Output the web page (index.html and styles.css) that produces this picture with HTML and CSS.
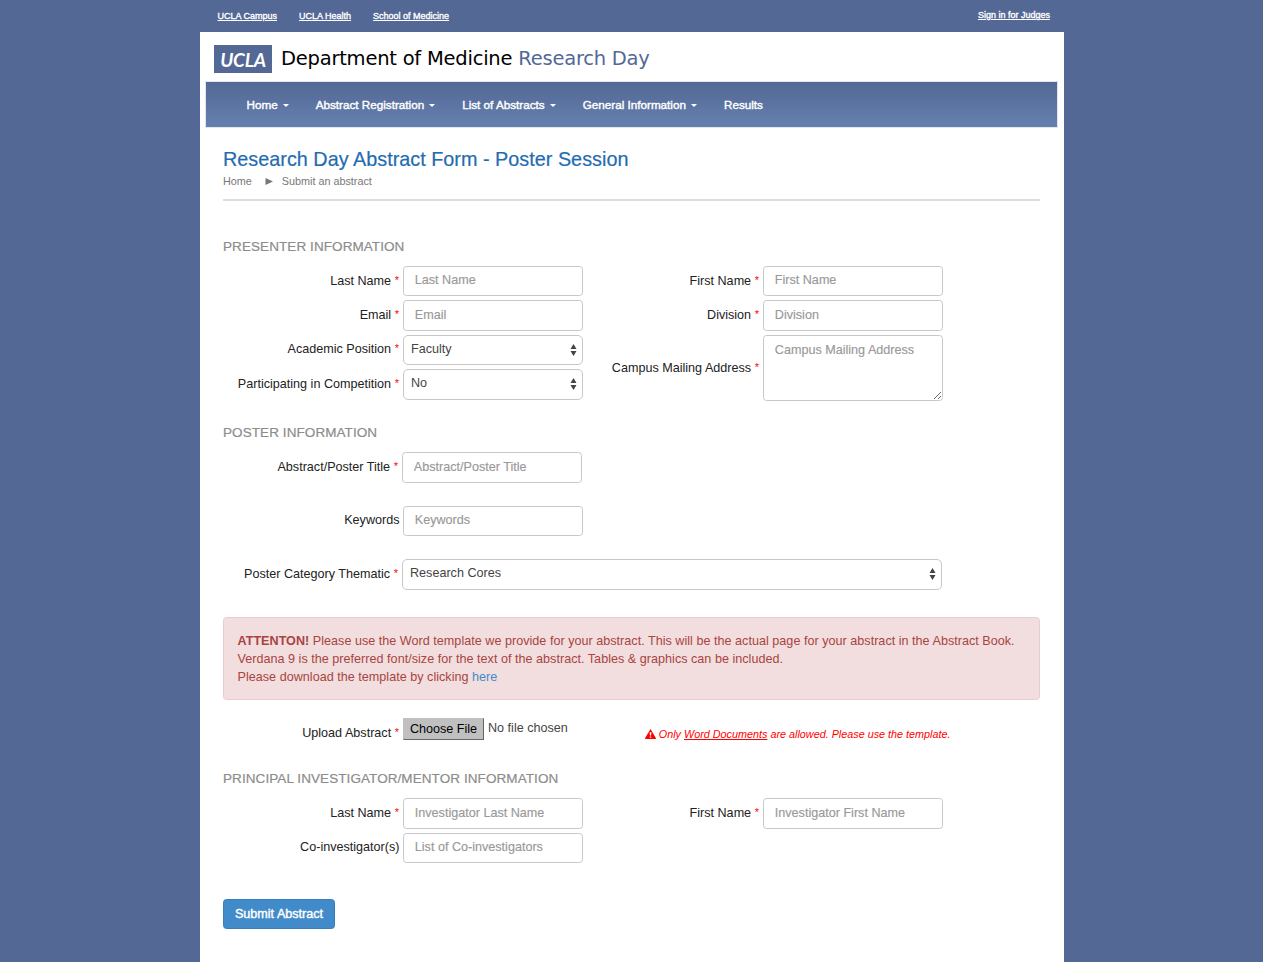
FILE: index.html
```html
<!DOCTYPE html>
<html lang="en">
<head>
<meta charset="utf-8">
<title>Research Day Abstract Form</title>
<link rel="stylesheet" href="styles.css">
</head>
<body>
<div class="page">
  <div class="topbar">
    <div class="toplinks"><a href="#">UCLA Campus</a><a href="#">UCLA Health</a><a href="#">School of Medicine</a></div>
    <a class="signin" href="#">Sign in for Judges</a>
  </div>
  <div class="sheet">
    <header class="brand">
      <span class="badge">UCLA</span>
      <span class="dept">Department of Medicine</span>
      <span class="day">Research Day</span>
    </header>
    <nav class="nav">
      <a class="n1" href="#"><span>Home</span><i class="caret"></i></a>
      <a class="n2" href="#"><span>Abstract Registration</span><i class="caret"></i></a>
      <a class="n3" href="#"><span>List of Abstracts</span><i class="caret"></i></a>
      <a class="n4" href="#"><span>General Information</span><i class="caret"></i></a>
      <a class="n5" href="#"><span>Results</span></a>
    </nav>
    <main class="content">
      <h1>Research Day Abstract Form - Poster Session</h1>
      <div class="crumbs"><span>Home</span><svg class="arrow" viewBox="0 0 8 7"><path d="M0.5 0L8 3.5L0.5 7Z"/></svg><span>Submit an abstract</span></div>
      <form>
        <h2 class="h-presenter">Presenter Information</h2>
        <div class="columns">
          <div class="stack">
            <div class="row"><label>Last Name <b>*</b></label><input placeholder="Last Name"></div>
            <div class="row"><label>Email <b>*</b></label><input placeholder="Email"></div>
            <div class="row"><label>Academic Position <b>*</b></label><div class="select"><span>Faculty</span><svg viewBox="0 0 6 12"><path d="M0 5L3 0L6 5ZM0 7L3 12L6 7Z"/></svg></div></div>
            <div class="row"><label>Participating in Competition <b>*</b></label><div class="select"><span>No</span><svg viewBox="0 0 6 12"><path d="M0 5L3 0L6 5ZM0 7L3 12L6 7Z"/></svg></div></div>
          </div>
          <div class="stack">
            <div class="row"><label>First Name <b>*</b></label><input placeholder="First Name"></div>
            <div class="row"><label>Division <b>*</b></label><input placeholder="Division"></div>
            <div class="row tall"><label>Campus Mailing Address <b>*</b></label><textarea placeholder="Campus Mailing Address"></textarea></div>
          </div>
        </div>
        <h2 class="h-poster">Poster Information</h2>
        <div class="poster">
          <div class="row shift"><label>Abstract/Poster Title <b>*</b></label><input placeholder="Abstract/Poster Title"></div>
          <div class="row"><label>Keywords</label><input placeholder="Keywords"></div>
          <div class="row shift wide"><label>Poster Category Thematic <b>*</b></label><div class="select"><span>Research Cores</span><svg viewBox="0 0 6 12"><path d="M0 5L3 0L6 5ZM0 7L3 12L6 7Z"/></svg></div></div>
        </div>
        <div class="alert"><strong>ATTENTON!</strong> Please use the Word template we provide for your abstract. This will be the actual page for your abstract in the Abstract Book.<br>Verdana 9 is the preferred font/size for the text of the abstract. Tables &amp; graphics can be included.<br>Please download the template by clicking <a href="#">here</a></div>
        <div class="upload">
          <label>Upload Abstract <b>*</b></label>
          <button type="button" class="file">Choose File</button>
          <span class="nofile">No file chosen</span>
          <div class="warn"><svg viewBox="0 0 11 10"><path fill-rule="evenodd" d="M5.5 0L11 9.2Q11 10 10.4 10H0.6Q0 10 0 9.2ZM4.6 3.2L4.9 6.6H6.1L6.4 3.2ZM4.8 7.4V8.7H6.2V7.4Z"/></svg><em>Only <u>Word Documents</u> are allowed. Please use the template.</em></div>
        </div>
        <h2 class="h-pi">Principal Investigator/Mentor Information</h2>
        <div class="columns">
          <div class="stack">
            <div class="row"><label>Last Name <b>*</b></label><input placeholder="Investigator Last Name"></div>
            <div class="row"><label>Co-investigator(s)</label><input placeholder="List of Co-investigators"></div>
          </div>
          <div class="stack">
            <div class="row"><label>First Name <b>*</b></label><input placeholder="Investigator First Name"></div>
          </div>
        </div>
        <button type="button" class="submit">Submit Abstract</button>
      </form>
    </main>
  </div>
</div>
</body>
</html>
```
FILE: styles.css
```css
* { box-sizing: border-box; }
body { margin: 0; background: #536895; font: 12.6px/18px "Liberation Sans", Arial, sans-serif; color: #222; overflow: hidden; }
.page { width: 864px; margin-left: 200px; height: 962px; display: flex; flex-direction: column; }
.topbar { height: 32px; flex: none; display: flex; justify-content: space-between; padding: 10px 14px 0 17.5px; font-size: 9px; line-height: 12px; -webkit-text-stroke: 0.35px #fff; }
.topbar a { color: #fff; }
.toplinks { display: flex; gap: 22px; }
.signin { margin-top: -1px; }
.sheet { background: #fff; flex: 1; }
.brand { height: 50px; display: flex; align-items: flex-start; padding: 13px 0 0 14px; font: 19.5px/27px "DejaVu Sans", Verdana, sans-serif; letter-spacing: -0.23px; white-space: nowrap; }
.badge { width: 58px; height: 28px; background: #536895; color: #fff; text-align: center; font: italic 700 19px/29px Lato, sans-serif; letter-spacing: -0.2px; }
.dept { margin-left: 9px; color: #000; }
.day { margin-left: 6px; color: #536895; }
.nav { margin: -1px 6px 0 5px; height: 47px; display: flex; align-items: center; border: 1px solid #e3e5ee; background: linear-gradient(#536895, #6580af); padding-left: 40.5px; font-size: 11.7px; }
.nav a { color: #fff; text-decoration: none; display: flex; align-items: center; -webkit-text-stroke: 0.4px #fff; white-space: nowrap; }
.n1, .n2, .n3, .n4 { margin-right: 27px; }
.caret { border: 3px solid transparent; border-top-color: #fff; border-bottom: 0; margin: 1px 0 0 5px; }
.content { padding: 19px 24px 0 23px; }
h1 { margin: 0; font-size: 19.8px; line-height: 24px; font-weight: 400; color: #1f6cb0; -webkit-text-stroke: 0.2px #1f6cb0; letter-spacing: 0.02px; }
.crumbs { display: flex; align-items: center; padding-bottom: 9px; margin-top: 1px; height: 29px; border-bottom: 2px solid #ddd; font-size: 10.8px; color: #777; }
.arrow { width: 8px; height: 7px; fill: #777; margin: 0 9px 0 13px; }
h2 { margin: 0; height: 20px; font-size: 13.5px; line-height: 20px; font-weight: 400; color: #8c8c8c; text-transform: uppercase; white-space: nowrap; letter-spacing: 0.08px; -webkit-text-stroke: 0.2px #8c8c8c; }
.h-presenter { margin-top: 36px; margin-bottom: 9px; }
.columns { display: flex; align-items: flex-start; }
.stack { display: grid; gap: 4px; width: 360px; }
.row { display: grid; grid-template-columns: 180px 180px; height: 30.4px; align-items: center; }
.row label, .upload label { text-align: right; padding-right: 3.5px; white-space: nowrap; }
.row label { padding-bottom: 1px; }
label b { color: #f00; font-weight: 400; font-size: 11px; line-height: 1; vertical-align: 1px; margin-right: 0.6px; }
input, textarea, .select { width: 100%; height: 30.4px; border: 1px solid #c8c8c8; border-radius: 3.5px; background: #fff; font: inherit; color: #444; outline: 0; }
input { padding: 0 10.8px 2px; }
textarea { display: block; height: 66px; padding: 5px 10.8px; resize: both; }
.tall { height: 66px; }
.tall label { padding-bottom: 0; }
::placeholder { color: #999; opacity: 1; -webkit-text-stroke: 0.15px #999; }
.select { display: flex; justify-content: space-between; align-items: center; padding: 0 5px 0 7px; border-radius: 5px; }
.select span { padding-bottom: 2px; }
.select svg { width: 7px; height: 12px; fill: #444; }
.h-poster { margin-top: 22.6px; margin-bottom: 9px; }
.poster { display: grid; gap: 23px; }
.shift { grid-template-columns: 179px 180px; }
.wide { grid-template-columns: 179px 540px; }
.alert { margin-top: 27.8px; height: 83px; width: 817px; padding: 14px 13.5px; border: 1px solid #e8ccd1; border-radius: 3.5px; background: #f2dede; color: #a94442; white-space: nowrap; letter-spacing: 0.018px; }
.alert a { color: #428bca; text-decoration: none; }
.upload { display: flex; height: 24px; margin-top: 18px; white-space: nowrap; }
.upload label { width: 180px; padding-top: 6px; }
.file { width: 81px; height: 22px; padding: 0; font: inherit; background: #c0c0c0; border: 1px solid; border-color: #c0c0c0 #666 #666 #c0c0c0; color: #000; }
.nofile { margin-left: 4px; padding-top: 1px; color: #444; }
.warn { display: flex; align-items: center; height: 18px; margin: 7px 0 0 77px; color: #f00; font-size: 10.8px; }
.warn svg { width: 11px; height: 10px; fill: #f00; margin-right: 3px; }
.h-pi { margin-top: 27px; margin-bottom: 9px; }
.submit { display: block; margin-top: 36px; width: 112px; height: 30px; border: 1px solid #357ebd; border-radius: 3.5px; background: #428bca; color: #fff; font: 12.6px/18px "Liberation Sans", Arial, sans-serif; padding: 0; -webkit-text-stroke: 0.4px #fff; }
```
